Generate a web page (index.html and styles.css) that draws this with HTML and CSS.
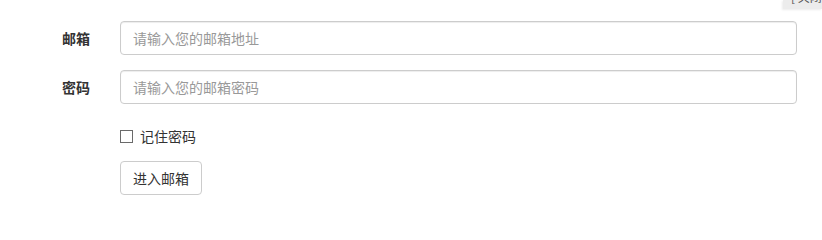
FILE: index.html
```html
<!DOCTYPE html>
<html lang="zh-CN">
<head>
<meta charset="utf-8">
<title>登录邮箱</title>
<link rel="stylesheet" href="styles.css">
</head>
<body>
<div class="corner-tab"><span class="corner-text">[ 关闭 ]</span></div>
<form class="form">
  <div class="row">
    <label class="label" for="email">邮箱</label>
    <input class="control" id="email" type="text" placeholder="请输入您的邮箱地址">
  </div>
  <div class="row">
    <label class="label" for="pwd">密码</label>
    <input class="control" id="pwd" type="password" placeholder="请输入您的邮箱密码">
  </div>
  <div class="row">
    <span></span>
    <label class="check"><input class="box" type="checkbox"><span>记住密码</span></label>
  </div>
  <div class="row">
    <span></span>
    <div><button class="btn" type="button">进入邮箱</button></div>
  </div>
</form>
</body>
</html>
```

FILE: styles.css
```css
html, body {
  margin: 0;
  padding: 0;
  background: #fff;
}
body {
  font-family: "Noto Sans CJK SC", "Liberation Sans", sans-serif;
  font-size: 14px;
  line-height: 20px;
  color: #333;
  position: relative;
  width: 822px;
  height: 224px;
  overflow: hidden;
}
.corner-tab {
  position: absolute;
  top: 0;
  right: 0;
  width: 39px;
  height: 9px;
  background: #ececec;
  overflow: hidden;
  box-shadow: -1px 1px 2px rgba(0,0,0,0.08);
}
.corner-text {
  position: absolute;
  left: 8px;
  top: -11px;
  font-size: 12px;
  line-height: 16px;
  color: #555;
  white-space: nowrap;
}
.form {
  padding: 21px 25px 0 0;
  display: flex;
  flex-direction: column;
  gap: 15px;
}
.row {
  display: grid;
  grid-template-columns: 90px 1fr;
  column-gap: 30px;
  align-items: start;
}
.label {
  text-align: right;
  font-weight: bold;
  padding-top: 7px;
  line-height: 20px;
}
.control {
  box-sizing: border-box;
  height: 34px;
  width: 100%;
  padding: 6px 12px;
  font-family: inherit;
  font-size: 14px;
  line-height: 20px;
  color: #555;
  border: 1px solid #ccc;
  border-radius: 4px;
  box-shadow: inset 0 1px 1px rgba(0,0,0,0.075);
  outline: none;
}
.control::placeholder {
  color: #999;
}
.check {
  display: flex;
  align-items: center;
  gap: 7px;
  padding-top: 7px;
  height: 20px;
  line-height: 20px;
}
.box {
  appearance: none;
  -webkit-appearance: none;
  margin: 0;
  width: 13px;
  height: 13px;
  border: 1px solid #6a6a6a;
  background: #fff;
  box-sizing: border-box;
}
.btn {
  box-sizing: border-box;
  height: 34px;
  padding: 6px 12px;
  font-family: inherit;
  font-size: 14px;
  line-height: 20px;
  color: #333;
  background: #fff;
  border: 1px solid #ccc;
  border-radius: 4px;
}
```
